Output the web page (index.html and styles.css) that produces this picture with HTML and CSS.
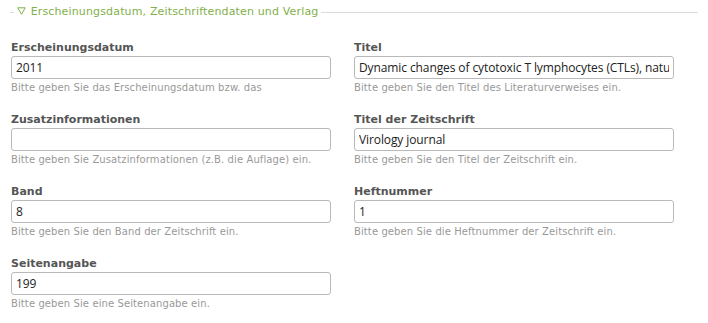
FILE: index.html
```html
<!DOCTYPE html>
<html lang="de">
<head>
    <meta charset="UTF-8">
    <title>Erscheinungsdatum, Zeitschriftendaten und Verlag</title>
    <link rel="stylesheet" href="styles.css">
</head>
<body>
    <fieldset class="section">
        <legend class="section-title">
            <svg class="toggle" width="9" height="8" viewBox="0 0 9 8"><path d="M0.7 0.8 H8.3 L4.5 7.3 Z" fill="none" stroke="#7fb04a" stroke-width="1"/></svg>
            Erscheinungsdatum, Zeitschriftendaten und Verlag
        </legend>

        <div class="fields">
            <div class="field">
                <label>Erscheinungsdatum</label>
                <input type="text" value="2011">
                <p class="help">Bitte geben Sie das Erscheinungsdatum bzw. das</p>
            </div>
            <div class="field">
                <label>Titel</label>
                <input type="text" value="Dynamic changes of cytotoxic T lymphocytes (CTLs), natural killer (NK) cells and regulatory T cells">
                <p class="help">Bitte geben Sie den Titel des Literaturverweises ein.</p>
            </div>
            <div class="field">
                <label>Zusatzinformationen</label>
                <input type="text" value="">
                <p class="help">Bitte geben Sie Zusatzinformationen (z.B. die Auflage) ein.</p>
            </div>
            <div class="field">
                <label>Titel der Zeitschrift</label>
                <input type="text" value="Virology journal">
                <p class="help">Bitte geben Sie den Titel der Zeitschrift ein.</p>
            </div>
            <div class="field">
                <label>Band</label>
                <input type="text" value="8">
                <p class="help">Bitte geben Sie den Band der Zeitschrift ein.</p>
            </div>
            <div class="field">
                <label>Heftnummer</label>
                <input type="text" value="1">
                <p class="help">Bitte geben Sie die Heftnummer der Zeitschrift ein.</p>
            </div>
            <div class="field">
                <label>Seitenangabe</label>
                <input type="text" value="199">
                <p class="help">Bitte geben Sie eine Seitenangabe ein.</p>
            </div>
        </div>
    </fieldset>
</body>
</html>
```

FILE: styles.css
```css
body {
    margin: 0;
    background-color: #fff;
    font-family: "DejaVu Sans", Verdana, sans-serif;
}
.section {
    margin: 5px 10px 0 10px;
    padding: 0 0 0 1px;
    border: none;
    border-top: 1px solid #dcdcdc;
    min-width: 0;
}
.section-title {
    margin-left: 3px;
    padding: 0 3px;
    font-size: 11px;
    line-height: 14px;
    letter-spacing: 0.15px;
    color: #7fb04a;
}
.toggle {
    vertical-align: 0;
    margin-right: 1px;
}
.fields {
    display: grid;
    grid-template-columns: 320px 320px;
    column-gap: 23px;
    row-gap: 18px;
    margin-top: 22px;
}
.field label {
    display: block;
    font-size: 11px;
    line-height: 14px;
    font-weight: bold;
    color: #555;
    margin-bottom: 1px;
}
.field input {
    display: block;
    box-sizing: border-box;
    width: 320px;
    height: 23px;
    margin: 0;
    padding: 0 4px;
    border: 1px solid #b9b9b9;
    border-radius: 3px;
    font-family: "Open Sans", sans-serif;
    font-size: 12px;
    letter-spacing: -0.1px;
    color: #222;
}
.help {
    margin: 2px 0 0 0;
    font-size: 10px;
    line-height: 14px;
    letter-spacing: 0.1px;
    color: #999;
}
```
